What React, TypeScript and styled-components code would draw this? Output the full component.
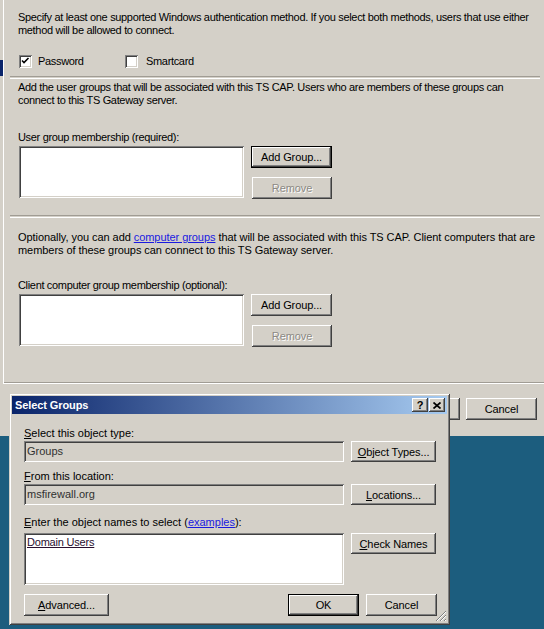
import React from "react";
import styled, { createGlobalStyle, css } from "styled-components";

const Global = createGlobalStyle`
  html, body { margin: 0; padding: 0; }
  body {
    background: #1c5d7e;
    font-family: "Liberation Sans", Arial, sans-serif;
    font-size: 11px;
    color: #000;
  }
`;

const FACE = "#d4d0c8";

const Screen = styled.div`
  position: relative;
  width: 544px;
  height: 629px;
  background: #1c5d7e;
  overflow: hidden;
`;

const MainWindow = styled.div`
  position: relative;
  height: 436px;
  background: ${FACE};
  display: flex;
  flex-direction: column;
  &::before {
    content: "";
    position: absolute;
    left: 0;
    top: 60px;
    width: 3px;
    height: 16px;
    background: #0a246a;
  }
`;

const Panel = styled.div`
  box-sizing: border-box;
  height: 384px;
  margin-left: 3px;
  border-left: 1px solid #fff;
  border-bottom: 1px solid #fff;
  box-shadow: inset 0 -1px 0 #a09c94;
  padding: 11px 4px 0 14px;
  display: flex;
  flex-direction: column;
  letter-spacing: -0.33px;
`;

const Para = styled.p<{ $mt?: number; $wide?: boolean }>`
  margin: ${(p) => p.$mt ?? 0}px 0 0 0;
  line-height: 13px;
  white-space: nowrap;
  letter-spacing: ${(p) => (p.$wide ? "-0.06px" : "inherit")};
`;

const Label = styled.div<{ $mt?: number }>`
  margin-top: ${(p) => p.$mt ?? 0}px;
  line-height: 13px;
  white-space: nowrap;
`;

const Link = styled.span`
  color: #1a1ae0;
  text-decoration: underline;
`;

const CheckRow = styled.div`
  display: flex;
  align-items: center;
  height: 13px;
  margin-top: 18px;
  padding-left: 1px;
`;

const CheckItem = styled.label<{ $w: number; $gap: number }>`
  display: flex;
  align-items: center;
  gap: ${(p) => p.$gap}px;
  width: ${(p) => p.$w}px;
  line-height: 13px;
`;

const sunken = css`
  box-shadow: inset 1px 1px #808080, inset -1px -1px #fff, inset 2px 2px #404040,
    inset -2px -2px ${FACE};
`;

const raised = css`
  box-shadow: inset -1px -1px #404040, inset 1px 1px #fff, inset -2px -2px #808080,
    inset 2px 2px ${FACE};
`;

const Box = styled.span`
  box-sizing: border-box;
  width: 13px;
  height: 13px;
  background: #fff;
  ${sunken};
  display: flex;
  align-items: center;
  justify-content: center;
`;

const Separator = styled.div<{ $mt: number }>`
  margin: ${(p) => p.$mt}px 0 0 -8px;
  height: 1px;
  border-top: 1px solid #a09c94;
  border-bottom: 1px solid #fff;
`;

const GroupRow = styled.div`
  display: flex;
  gap: 7px;
  margin-top: 2px;
  padding-left: 1px;
`;

const ListBox = styled.div<{ $w: number; $h: number }>`
  box-sizing: border-box;
  width: ${(p) => p.$w}px;
  height: ${(p) => p.$h}px;
  background: #fff;
  ${sunken};
  padding: 3px 3px;
  line-height: 13px;
`;

const ButtonCol = styled.div<{ $gap: number }>`
  display: flex;
  flex-direction: column;
  align-items: flex-start;
  gap: ${(p) => p.$gap}px;
`;

const Button = styled.button<{ $w: number; $h?: number; $def?: boolean; $off?: boolean; $ml?: number }>`
  box-sizing: border-box;
  width: ${(p) => p.$w}px;
  height: ${(p) => p.$h ?? 22}px;
  margin-left: ${(p) => p.$ml ?? 0}px;
  padding: 0;
  font-family: "Liberation Sans", Arial, sans-serif;
  font-size: 11px;
  letter-spacing: -0.1px;
  color: ${(p) => (p.$off ? "#8c8a84" : "#000")};
  text-shadow: ${(p) => (p.$off ? "1px 1px #fff" : "none")};
  background: ${FACE};
  border: ${(p) => (p.$def ? "1px solid #000" : "none")};
  ${raised};
  cursor: default;
`;

const Footer = styled.div`
  display: flex;
  justify-content: flex-end;
  gap: 6px;
  padding: 14px 7px 0 0;
`;

/* ---------- dialog ---------- */

const Dialog = styled.div`
  position: absolute;
  left: 9px;
  top: 393px;
  width: 441px;
  height: 232px;
  box-sizing: border-box;
  background: ${FACE};
  box-shadow: inset 1px 1px ${FACE}, inset -1px -1px #404040, inset 2px 2px #fff,
    inset -2px -2px #808080;
  padding: 3px;
  display: flex;
  flex-direction: column;
`;

const TitleBar = styled.div`
  height: 18px;
  display: flex;
  align-items: center;
  padding: 0 2px 0 3px;
  background: linear-gradient(to right, #0a246a, #a6caf0);
  color: #fff;
  font-weight: bold;
  font-size: 11px;
`;

const TitleText = styled.span`
  flex: 1;
  letter-spacing: -0.1px;
`;

const CaptionBtn = styled.span<{ $ml?: number }>`
  box-sizing: border-box;
  width: 16px;
  height: 14px;
  margin-left: ${(p) => p.$ml ?? 0}px;
  background: ${FACE};
  ${raised};
  display: flex;
  align-items: center;
  justify-content: center;
  color: #000;
  font-weight: bold;
  font-size: 11px;
  line-height: 14px;
`;

const DialogBody = styled.div`
  flex: 1;
  position: relative;
  padding: 13px 0 0 12px;
  display: flex;
  flex-direction: column;
`;

const FieldRow = styled.div<{ $mt?: number }>`
  display: flex;
  align-items: flex-start;
  gap: 7px;
  margin-top: ${(p) => p.$mt ?? 0}px;
`;

const Field = styled.div`
  box-sizing: border-box;
  width: 320px;
  height: 21px;
  background: ${FACE};
  ${sunken};
  padding: 0 3px;
  line-height: 20px;
  color: #303030;
`;

const NameText = styled.span`
  color: #2a1030;
  text-decoration: underline;
  letter-spacing: -0.2px;
`;

const BottomRow = styled.div`
  display: flex;
  margin-top: 9px;
`;

const Grip = styled.svg`
  position: absolute;
  right: 0;
  bottom: 0;
`;

function Check() {
  return (
    <svg width="9" height="9" viewBox="0 0 9 9">
      <path d="M1 3.5 L3 5.5 L7.5 1" fill="none" stroke="#000" strokeWidth="1.6" />
    </svg>
  );
}

export default function App() {
  return (
    <Screen>
      <Global />
      <MainWindow>
        <Panel>
          <Para>
            Specify at least one supported Windows authentication method. If you select both methods, users that use either
            <br />
            method will be allowed to connect.
          </Para>
          <CheckRow>
            <CheckItem $w={106} $gap={6}>
              <Box>
                <Check />
              </Box>
              Password
            </CheckItem>
            <CheckItem $w={120} $gap={8}>
              <Box />
              Smartcard
            </CheckItem>
          </CheckRow>
          <Separator $mt={8} />
          <Para $mt={2}>
            Add the user groups that will be associated with this TS CAP. Users who are members of these groups can
            <br />
            connect to this TS Gateway server.
          </Para>
          <Label $mt={24}>User group membership (required):</Label>
          <GroupRow>
            <ListBox $w={225} $h={52} />
            <ButtonCol $gap={9}>
              <Button $w={81} $def>
                Add Group...
              </Button>
              <Button $w={80} $off $ml={1}>
                Remove
              </Button>
            </ButtonCol>
          </GroupRow>
          <Separator $mt={16} />
          <Para $mt={13} $wide>
            Optionally, you can add <Link>computer groups</Link> that will be associated with this TS CAP. Client computers that are
            <br />
            members of these groups can connect to this TS Gateway server.
          </Para>
          <Label $mt={22}>Client computer group membership (optional):</Label>
          <GroupRow>
            <ListBox $w={225} $h={52} />
            <ButtonCol $gap={9}>
              <Button $w={81}>Add Group...</Button>
              <Button $w={80} $off $ml={1}>
                Remove
              </Button>
            </ButtonCol>
          </GroupRow>
        </Panel>
        <Footer>
          <Button $w={75} aria-label="Finish" />
          <Button $w={71}>Cancel</Button>
        </Footer>
      </MainWindow>

      <Dialog>
        <TitleBar>
          <TitleText>Select Groups</TitleText>
          <CaptionBtn>?</CaptionBtn>
          <CaptionBtn $ml={1}>
            <svg width="8" height="7" viewBox="0 0 8 7">
              <path d="M0.5 0.5 L7.5 6.5 M7.5 0.5 L0.5 6.5" stroke="#000" strokeWidth="1.7" />
            </svg>
          </CaptionBtn>
        </TitleBar>
        <DialogBody>
          <Label>
            <u>S</u>elect this object type:
          </Label>
          <FieldRow $mt={1}>
            <Field>Groups</Field>
            <Button $w={85} $h={21}>
              <u>O</u>bject Types...
            </Button>
          </FieldRow>
          <Label $mt={8}>
            <u>F</u>rom this location:
          </Label>
          <FieldRow $mt={1}>
            <Field>msfirewall.org</Field>
            <Button $w={85} $h={21}>
              <u>L</u>ocations...
            </Button>
          </FieldRow>
          <Label $mt={11}>
            <u>E</u>nter the object names to select (<Link>examples</Link>):
          </Label>
          <FieldRow $mt={4}>
            <ListBox $w={320} $h={52}>
              <NameText>Domain Users</NameText>
            </ListBox>
            <Button $w={85} $h={21}>
              <u>C</u>heck Names
            </Button>
          </FieldRow>
          <BottomRow>
            <Button $w={85}>
              <u>A</u>dvanced...
            </Button>
            <Button $w={71} $def $ml={179}>
              OK
            </Button>
            <Button $w={71} $ml={7}>
              Cancel
            </Button>
          </BottomRow>
          <Grip width="12" height="12" viewBox="0 0 12 12">
            <path d="M11 1 L1 11 M11 5 L5 11 M11 9 L9 11" stroke="#808080" strokeWidth="1" />
            <path d="M11 2 L2 11 M11 6 L6 11 M11 10 L10 11" stroke="#fff" strokeWidth="1" />
          </Grip>
        </DialogBody>
      </Dialog>
    </Screen>
  );
}
